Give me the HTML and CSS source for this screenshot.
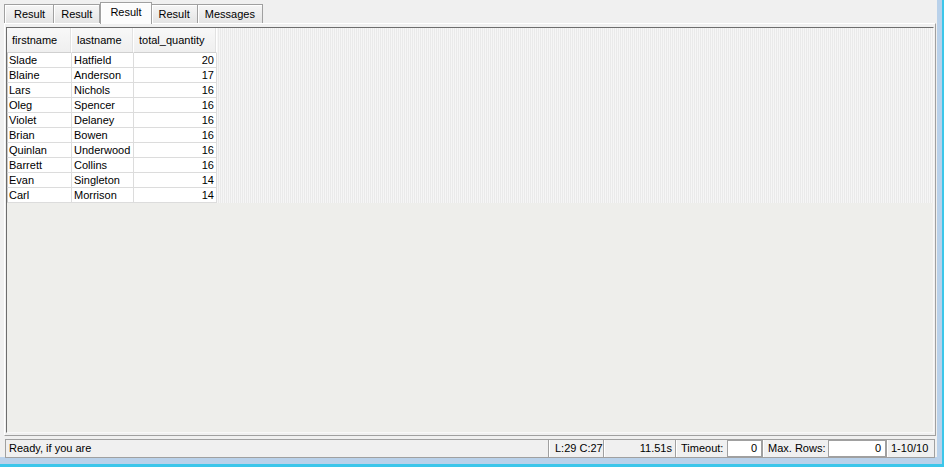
FILE: index.html
```html
<!DOCTYPE html>
<html lang="en">
<head>
    <meta charset="UTF-8">
    <title>Query Results</title>
    <link rel="stylesheet" href="styles.css">
</head>
<body>
    <div class="app">
        <div class="tabs">
            <div class="tab">Result</div>
            <div class="tab">Result</div>
            <div class="tab active">Result</div>
            <div class="tab">Result</div>
            <div class="tab">Messages</div>
        </div>

        <div class="page">
            <div class="grid">
                <div class="rows">
                    <table class="result">
                        <thead>
                            <tr>
                                <th class="c1">firstname</th>
                                <th class="c2">lastname</th>
                                <th class="c3">total_quantity</th>
                            </tr>
                        </thead>
                        <tbody>
                            <tr><td>Slade</td><td>Hatfield</td><td class="num">20</td></tr>
                            <tr><td>Blaine</td><td>Anderson</td><td class="num">17</td></tr>
                            <tr><td>Lars</td><td>Nichols</td><td class="num">16</td></tr>
                            <tr><td>Oleg</td><td>Spencer</td><td class="num">16</td></tr>
                            <tr><td>Violet</td><td>Delaney</td><td class="num">16</td></tr>
                            <tr><td>Brian</td><td>Bowen</td><td class="num">16</td></tr>
                            <tr><td>Quinlan</td><td>Underwood</td><td class="num">16</td></tr>
                            <tr><td>Barrett</td><td>Collins</td><td class="num">16</td></tr>
                            <tr><td>Evan</td><td>Singleton</td><td class="num">14</td></tr>
                            <tr><td>Carl</td><td>Morrison</td><td class="num">14</td></tr>
                        </tbody>
                    </table>
                </div>
            </div>
        </div>

        <div class="statusbar">
            <div class="sb-cell sb-msg">Ready, if you are</div>
            <div class="sb-cell sb-pos">L:29 C:27</div>
            <div class="sb-cell sb-time">11.51s</div>
            <div class="sb-cell sb-label sb-tlabel">Timeout:</div>
            <div class="sb-input sb-timeout">0</div>
            <div class="sb-cell sb-label sb-mlabel">Max. Rows:</div>
            <div class="sb-input sb-maxrows">0</div>
            <div class="sb-cell sb-count">1-10/10</div>
        </div>
    </div>
</body>
</html>
```

FILE: styles.css
```css
body {
    margin: 0;
    width: 944px;
    height: 467px;
    overflow: hidden;
    background: #b9d1ea;
    font-family: 'Liberation Sans', Arial, sans-serif;
    font-size: 11px;
    color: #000;
}
.app {
    width: 937px;
    height: 457px;
    background: #f0f0f0;
    display: flex;
    flex-direction: column;
    border-right: 5px solid #b9d1ea;
    border-bottom: 7px solid #b9d1ea;
    box-shadow: 2px 3px 0 5px #3cc6ea;
}

/* tabs */
.tabs {
    display: flex;
    align-items: flex-end;
    height: 23px;
    padding-left: 4px;
    flex: none;
}
.tab {
    height: 18px;
    line-height: 18px;
    padding: 0 7px;
    border: 1px solid #a0a0a0;
    border-bottom: none;
    margin-right: -1px;
    background: linear-gradient(#f6f6f6, #e4e4e4);
    box-shadow: inset 1px 1px 0 #fff;
}
.tab:first-child {
    padding: 0 8px 0 9px;
}
.tab.active {
    height: 21px;
    line-height: 19px;
    padding: 0 9px;
    margin: 0 -1px -1px 1px;
    background: #fcfcfc;
    position: relative;
    z-index: 1;
}

/* tab page */
.page {
    flex: none;
    height: 406px;
    margin: 0 1px 0 4px;
    padding: 3px 1px 2px 1px;
    border: 1px solid;
    border-color: #fff #a0a0a0 #a0a0a0 #fff;
}
.grid {
    height: 100%;
    box-sizing: border-box;
    border: 1px solid;
    border-color: #6d6d6d #f8f8f8 #f8f8f8 #6d6d6d;
    background: #eeeeeb;
}
.rows {
    background: repeating-linear-gradient(90deg, #f6f6f6 0 1px, #eaeaea 1px 2px);
}
.result {
    border-collapse: separate;
    border-spacing: 0;
    background: #fff;
}
.result th {
    height: 24px;
    padding: 0 0 0 5px;
    font-weight: normal;
    text-align: left;
    background: linear-gradient(#f8f8f8, #efefef);
    border-right: 1px solid #fff;
    border-bottom: 1px solid #d0d0d0;
    box-shadow: inset -1px 0 0 #e2e2e2;
}
.result .c1 { width: 59px; }
.result .c2 { width: 56px; }
.result .c3 { width: 77px; }
.result td {
    height: 14px;
    padding: 0 2px;
    line-height: 14px;
    border-right: 1px solid #dcdcdc;
    border-bottom: 1px solid #dcdcdc;
    white-space: nowrap;
}
.result td:first-child {
    border-left: 1px solid #c8c8c8;
    padding-left: 1px;
}
.result .num {
    text-align: right;
}

/* status bar */
.statusbar {
    flex: none;
    display: flex;
    height: 17px;
    margin: 3px 2px 0 5px;
    border: 1px solid #a0a0a0;
    line-height: 17px;
}
.sb-cell {
    flex: none;
    box-sizing: border-box;
    padding: 0 4px;
    white-space: nowrap;
}
.sb-cell + .sb-cell,
.sb-input + .sb-cell {
    border-left: 1px solid #a0a0a0;
    box-shadow: inset 1px 0 0 #fff;
}
.sb-msg {
    flex: 1;
    padding-left: 3px;
}
.sb-pos {
    width: 55px;
    padding-left: 6px;
}
.sb-time {
    width: 72px;
    text-align: right;
    padding-right: 3px;
}
.sb-label {
    padding-left: 5px;
}
.sb-tlabel { width: 52px; }
.sb-mlabel { width: 66px; }
.sb-input {
    flex: none;
    background: #fff;
    border: 1px solid #a0a0a0;
    line-height: 15px;
    text-align: right;
    padding-right: 4px;
    box-sizing: border-box;
    height: 17px;
}
.sb-timeout { width: 35px; }
.sb-maxrows { width: 58px; }
.sb-count {
    width: 48px;
    padding-left: 4px;
}
```
